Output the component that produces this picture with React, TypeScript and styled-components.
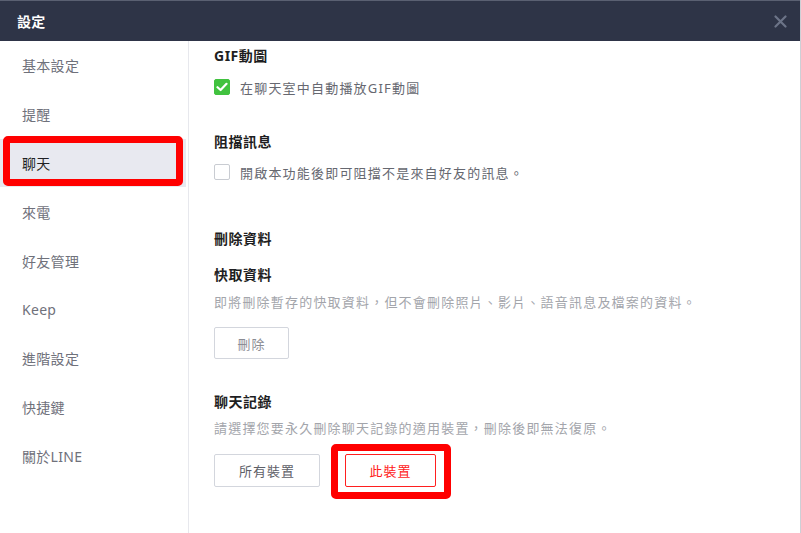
import React from "react";
import styled, { createGlobalStyle } from "styled-components";

const Global = createGlobalStyle`
  html, body { margin: 0; padding: 0; background: #ffffff; }
  body { font-family: "Noto Sans", "Noto Sans CJK TC", sans-serif; }
  * { box-sizing: border-box; }
`;

const Window = styled.div`
  width: 801px;
  height: 533px;
  display: flex;
  flex-direction: column;
  background: #fff;
  border-right: 1px solid #cdd0d6;
  overflow: hidden;
`;

const TitleBar = styled.div`
  height: 41px;
  flex: none;
  background: #2e3447;
  border-top: 1px solid #5a6072;
  display: flex;
  align-items: center;
  justify-content: space-between;
  padding: 0 8px 0 17px;
`;

const Title = styled.div`
  color: #fff;
  font-size: 14px;
  font-weight: 700;
  letter-spacing: 0.3px;
`;

const Close = styled.button`
  width: 24px;
  height: 24px;
  border: 0;
  background: transparent;
  padding: 0;
  display: flex;
  align-items: center;
  justify-content: center;
`;

const Body = styled.div`
  flex: 1;
  display: flex;
`;

const Sidebar = styled.nav`
  width: 189px;
  flex: none;
  border-right: 1px solid #e7e8ed;
  display: flex;
  flex-direction: column;
`;

const NavItem = styled.div<{ $active?: boolean }>`
  position: relative;
  height: 48.8px;
  display: flex;
  align-items: center;
  padding-left: 22px;
  font-size: 14px;
  letter-spacing: 0.3px;
  color: ${(p) => (p.$active ? "#1f1f24" : "#6f717b")};
  background: ${(p) => (p.$active ? "#e8e9f0" : "transparent")};
  margin-right: 2px;
`;

const Highlight = styled.div<{ $radius?: number }>`
  position: absolute;
  border: 7px solid #ff0000;
  border-radius: ${(p) => p.$radius ?? 5}px;
  pointer-events: none;
`;

const Content = styled.main`
  flex: 1;
  padding: 5px 0 0 25px;
  display: flex;
  flex-direction: column;
`;

const Heading = styled.div<{ $mt?: number }>`
  font-size: 14px;
  font-weight: 700;
  color: #1e1e22;
  line-height: 20px;
  letter-spacing: 0.5px;
  margin-top: ${(p) => p.$mt ?? 0}px;
`;

const CheckRow = styled.label<{ $mt?: number }>`
  display: flex;
  align-items: center;
  gap: 10px;
  height: 20px;
  margin-top: ${(p) => p.$mt ?? 0}px;
  font-size: 13px;
  letter-spacing: 1.2px;
  color: #666870;
`;

const Box = styled.span<{ $checked?: boolean }>`
  width: 16px;
  height: 16px;
  border-radius: 2px;
  flex: none;
  display: flex;
  align-items: center;
  justify-content: center;
  background: ${(p) => (p.$checked ? "#41c23f" : "#fff")};
  border: 1px solid ${(p) => (p.$checked ? "#41c23f" : "#c9ccd2")};
`;

const Desc = styled.div<{ $mt?: number }>`
  font-size: 13px;
  line-height: 20px;
  letter-spacing: 1.2px;
  color: #a3a5ab;
  margin-top: ${(p) => p.$mt ?? 0}px;
`;

const ButtonRow = styled.div<{ $mt?: number }>`
  display: flex;
  gap: 25px;
  margin-top: ${(p) => p.$mt ?? 0}px;
`;

const Btn = styled.button<{ $w: number; $danger?: boolean; $h?: number; $color?: string }>`
  width: ${(p) => p.$w}px;
  height: ${(p) => p.$h ?? 33}px;
  background: #fff;
  border: 1px solid ${(p) => (p.$danger ? "#ff1f1f" : "#d3d6dd")};
  border-radius: 2px;
  font-family: "Noto Sans", "Noto Sans CJK TC", sans-serif;
  font-size: 13px;
  letter-spacing: 1px;
  color: ${(p) => (p.$danger ? "#ff1a1a" : p.$color ?? "#5e6068")};
  padding: 0;
`;

const Anchor = styled.div`
  position: relative;
  display: flex;
`;

const navItems = ["基本設定", "提醒", "聊天", "來電", "好友管理", "Keep", "進階設定", "快捷鍵", "關於LINE"];

export default function App() {
  return (
    <>
      <Global />
      <Window>
        <TitleBar>
          <Title>設定</Title>
          <Close aria-label="close">
            <svg width="13" height="13" viewBox="0 0 13 13">
              <path d="M1.5 1.5 L11.5 11.5 M11.5 1.5 L1.5 11.5" stroke="#6c7488" strokeWidth="2.2" strokeLinecap="round" />
            </svg>
          </Close>
        </TitleBar>
        <Body>
          <Sidebar>
            {navItems.map((n) => (
              <NavItem key={n} $active={n === "聊天"}>
                {n}
                {n === "聊天" && (
                  <Highlight $radius={5} style={{ left: 3, top: -3, width: 180, height: 50 }} />
                )}
              </NavItem>
            ))}
          </Sidebar>
          <Content>
            <Heading>GIF動圖</Heading>
            <CheckRow $mt={11}>
              <Box $checked>
                <svg width="12" height="10" viewBox="0 0 12 10">
                  <path d="M1.5 5.2 L4.6 8 L10.5 1.8" stroke="#fff" strokeWidth="2.2" fill="none" strokeLinecap="round" strokeLinejoin="round" />
                </svg>
              </Box>
              在聊天室中自動播放GIF動圖
            </CheckRow>
            <Heading $mt={35}>阻擋訊息</Heading>
            <CheckRow $mt={10}>
              <Box />
              開啟本功能後即可阻擋不是來自好友的訊息。
            </CheckRow>
            <Heading $mt={47}>刪除資料</Heading>
            <Heading $mt={16}>快取資料</Heading>
            <Desc $mt={7}>即將刪除暫存的快取資料，但不會刪除照片、影片、語音訊息及檔案的資料。</Desc>
            <ButtonRow $mt={15}>
              <Btn $w={75} $h={32} $color="#8a8c93">刪除</Btn>
            </ButtonRow>
            <Heading $mt={33}>聊天記錄</Heading>
            <Desc $mt={6}>請選擇您要永久刪除聊天記錄的適用裝置，刪除後即無法復原。</Desc>
            <ButtonRow $mt={16}>
              <Btn $w={106}>所有裝置</Btn>
              <Anchor>
                <Btn $w={91} $danger>此裝置</Btn>
                <Highlight $radius={5} style={{ left: -14, top: -10, width: 120, height: 55 }} />
              </Anchor>
            </ButtonRow>
          </Content>
        </Body>
      </Window>
    </>
  );
}
